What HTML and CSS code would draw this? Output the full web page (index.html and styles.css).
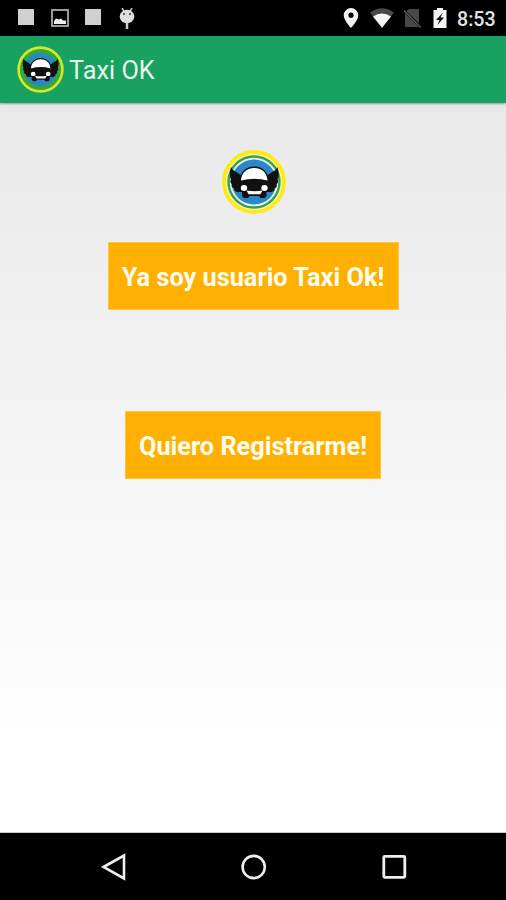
FILE: index.html
```html
<!DOCTYPE html>
<html lang="es">
<head>
<meta charset="utf-8">
<title>Taxi OK</title>
<link rel="stylesheet" href="styles.css">
</head>
<body>
<svg class="defs" width="0" height="0">
  <symbol id="taxi" viewBox="0 0 64 64">
    <circle cx="32" cy="32" r="22.500" fill="#2b87c8"/>
    <path d="M9 17c2 5 8 5 11 10l1 13c-5 4-9 2-9-2-2 0-3-2-2-4-2-1-2-3-1-5-2-2-1-8 0-12zM55.500 17c-2 5-8 5-11 10l-1 13c5 4 9 2 9-2 2 0 3-2 2-4 2-1 2-3 1-5 2-2 1-8 0-12z" fill="#111"/>
    <path d="M17 32c1-10 7-15.500 15.300-15.500S46.500 22 47.500 32l1 6-2 4h-2v4l-2 2h-4l-1.500-2h-9.500L26 48h-4l-2-2v-4h-2l-2-4z" fill="#111"/>
    <path d="M19 30.500C19.500 22 25.500 18 32.300 18S45 22 45.500 30.500q-13-3.500-26.500 0z" fill="#fff"/>
    <ellipse cx="22" cy="38" rx="3.200" ry="3" fill="#fff"/>
    <ellipse cx="42.500" cy="38" rx="3.200" ry="3" fill="#fff"/>
    <path d="M24.500 40.500q8 1.500 16 0l-2 3.800H26.500z" fill="#fff"/>
  </symbol>
</svg>
<div class="screen">
  <div class="status">
    <div class="group left">
      <i class="block"></i>
      <svg width="18" height="18" viewBox="0 0 18 18"><rect x="1" y="1" width="16" height="16" fill="none" stroke="#aaa" stroke-width="1.800"/><path d="M3 15v-3l2-2.500 3 1 2-1 2 2h3V15z" fill="#eee"/></svg>
      <i class="block"></i>
      <svg width="16" height="22" viewBox="0 0 16 22"><path d="M3 0l2 3M13 0l-2 3" stroke="#ccc" stroke-width="1.500"/><ellipse cx="8" cy="8.500" rx="7.300" ry="6.800" fill="#dedede"/><path d="M8 14v7" stroke="#ccc" stroke-width="2.500"/><circle cx="5" cy="6" r="1" fill="#333"/><circle cx="11" cy="6" r="1" fill="#333"/></svg>
    </div>
    <div class="group right">
      <svg class="pin" width="16" height="20" viewBox="0 0 16 20"><path fill-rule="evenodd" d="M8 0a7.300 7.300 0 0 0-7.300 7.300C.7 12.500 8 20 8 20s7.300-7.500 7.300-12.700A7.300 7.300 0 0 0 8 0zm0 4.600a2.600 2.600 0 1 1 0 5.200 2.600 2.600 0 0 1 0-5.200z" fill="#f2f2f2"/></svg>
      <svg class="wifi" width="24" height="20" viewBox="0 0 24 20"><path d="M0 4.500Q12-4 24 4.500L12 20z" fill="#484848"/><path d="M3 8.500Q12 2.500 21 8.500L12 19.800z" fill="#f5f5f5"/></svg>
      <svg class="sim" width="18" height="20" viewBox="0 0 18 20"><path d="M6 1h10v14.500L3.500 3.500zM2 5v14h13.500z" fill="#484848"/><path d="M1 2.500l16.500 17" stroke="#555" stroke-width="1.600"/></svg>
      <svg class="battery" width="14" height="20" viewBox="0 0 14 20"><path d="M4 0h6v2h3.500v18H.5V2H4z" fill="#f5f5f5"/><path d="M10 4.500l-7 7.500h3.500l-2 5L11 9.500H7.500z" fill="#111"/></svg>
      <span class="clock">8:53</span>
    </div>
  </div>
  <header class="bar">
    <svg class="bar-logo" viewBox="0 0 64 64"><circle cx="32" cy="32" r="29.800" fill="#35a936" stroke="#d5e82d" stroke-width="3.500"/><use href="#taxi" width="64" height="64"/></svg>
    <h1>Taxi OK</h1>
  </header>
  <main>
    <svg class="logo" viewBox="0 0 64 64"><circle cx="32" cy="32" r="30" fill="#f4f7ce" stroke="#fdea16" stroke-width="3.800"/><circle cx="32" cy="32" r="25.500" fill="#e4f2ef" stroke="#3e9f43" stroke-width="2.400"/><use href="#taxi" width="64" height="64"/></svg>
    <button class="login">Ya soy usuario Taxi Ok!</button>
    <button class="register">Quiero Registrarme!</button>
  </main>
  <nav>
    <svg width="26" height="28" viewBox="0 0 26 28"><path d="M2.500 14L23 2.500v23z" fill="none" stroke="#eee" stroke-width="2.600"/></svg>
    <svg width="26" height="28" viewBox="0 0 26 28"><circle cx="12.700" cy="14" r="11.100" fill="none" stroke="#eee" stroke-width="2.600"/></svg>
    <svg width="26" height="28" viewBox="0 0 26 28"><rect x="2.800" y="3.300" width="21" height="21" rx="1" fill="none" stroke="#eee" stroke-width="2.800"/></svg>
  </nav>
</div>
</body>
</html>
```
FILE: styles.css
```css
* { box-sizing: border-box; }
body { margin: 0; font-family: Roboto, sans-serif; }
svg { display: block; flex: none; }
.defs { position: absolute; }
.screen { width: 506px; height: 900px; display: flex; flex-direction: column; overflow: hidden; }
.status { height: 36px; background: #000; display: flex; justify-content: space-between; padding: 0 11px 0 18px; }
.group { display: flex; align-items: center; }
.left { gap: 16.500px; }
.block { width: 16px; height: 16px; background: #d0d0d0; margin-bottom: 2px; }
.left svg:last-child { margin: 1px 0 0 1px; }
.wifi { margin-left: 11px; }
.sim { margin-left: 9px; }
.battery { margin-left: 12px; }
.clock { color: #e4e4e4; font-size: 19.600px; font-weight: 500; line-height: 36px; margin: 3px 0 0 10px; width: 38px; white-space: nowrap; }
.bar { height: 67px; background: #18a15f; display: flex; align-items: center; padding-left: 17px; box-shadow: 0 1px 2px rgba(0,0,0,.35); z-index: 1; }
.bar-logo { width: 47px; height: 47px; }
.bar h1 { margin: 3px 0 0 5px; color: #e9f7ef; font-size: 25.300px; font-weight: 400; line-height: 30px; }
main { height: 730px; background: linear-gradient(#e9e9e9, #fff 90%); display: flex; flex-direction: column; align-items: center; padding-top: 47px; border-bottom: 1px solid #ccc; }
.logo { width: 64px; height: 64px; margin-left: 1px; }
button { border: 1px solid #ffc34a; border-radius: 0; background: #ffb000; color: #fffdf0; font: 700 25.300px/30px Roboto, sans-serif; height: 68px; padding: 3px 0 0; white-space: nowrap; }
.login { width: 291px; margin-top: 28px; }
.register { width: 256px; margin-top: 101px; }
nav { height: 67px; background: #000; display: flex; justify-content: space-between; align-items: center; padding: 0 99px 0 101px; }
```
